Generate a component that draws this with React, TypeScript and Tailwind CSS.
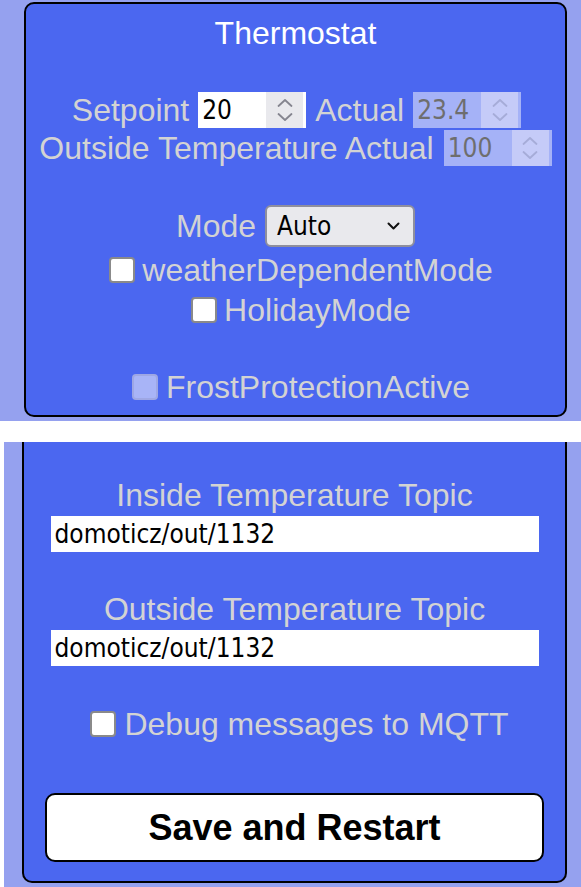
import React from "react";

function Spinner({ disabled }: { disabled?: boolean }) {
  const c = disabled ? "#a6acd8" : "#85858f";
  return (
    <div
      className={`h-full w-[37px] flex items-center justify-center ${
        disabled ? "bg-[#c5cbf8]" : "bg-[#e9e9ed]"
      }`}
    >
      <svg width="16" height="28" viewBox="0 0 16 28" fill="none" stroke={c} strokeWidth="1.8" strokeLinecap="round" strokeLinejoin="round">
        <path d="M1.5 10 L8 4 L14.5 10" />
        <path d="M1.5 18 L8 24 L14.5 18" />
      </svg>
    </div>
  );
}

function NumberBox({ value, disabled }: { value: string; disabled?: boolean }) {
  return (
    <div
      className={`flex h-[36px] w-[108px] items-stretch pr-[3px] ${
        disabled ? "bg-[#a5b2f7] text-[#6e6e6e]" : "bg-white text-black"
      }`}
    >
      <div className="flex flex-1 items-center pl-[4px] text-[26px] [font-family:'DejaVu_Sans_Condensed','DejaVu_Sans',sans-serif] [font-stretch:condensed]">
        {value}
      </div>
      <Spinner disabled={disabled} />
    </div>
  );
}

function Check({ disabled }: { disabled?: boolean }) {
  return (
    <div
      className={`h-[26px] w-[26px] rounded-[4px] border-2 ${
        disabled ? "border-[#9ea7e4] bg-[#a8b4f7]" : "border-[#8a8a8a] bg-white"
      }`}
    />
  );
}

export default function App() {
  return (
    <div className="flex h-[887px] w-[581px] flex-col overflow-hidden bg-white [font-family:'Liberation_Sans',Arial,sans-serif] text-[32px] leading-none text-[#d3d3d3]">
      {/* Section 1 */}
      <div className="h-[421px] bg-[#95a1ef] pl-[24px] pr-[14px] pt-[2px]">
        <div className="flex h-[415px] w-[543px] flex-col items-center rounded-[10px] border-2 border-black bg-[#4b67f0] pt-[10px]">
          <div className="flex h-[38px] items-center text-white">Thermostat</div>
          <div className="h-[39px]" />
          <div className="flex h-[38px] items-center gap-[9px] pl-[2px]">
            <span>Setpoint</span>
            <NumberBox value="20" />
            <span>Actual</span>
            <NumberBox value="23.4" disabled />
          </div>
          <div className="flex h-[37px] items-center gap-[10px]">
            <span>Outside Temperature Actual</span>
            <NumberBox value="100" disabled />
          </div>
          <div className="h-[39px]" />
          <div className="flex h-[43px] items-start gap-[9px]">
            <span className="mt-[5px]">Mode</span>
            <div className="flex h-[42px] w-[150px] items-center justify-between rounded-[6px] border-2 border-[#8f8f9d] bg-[#e9e9ed] pl-[10px] pr-[13px] text-[26px] text-black [font-family:'DejaVu_Sans_Condensed','DejaVu_Sans',sans-serif] [font-stretch:condensed]">
              <span>Auto</span>
              <svg width="13" height="9" viewBox="0 0 13 9" fill="none" stroke="#111" strokeWidth="2" strokeLinecap="round" strokeLinejoin="round">
                <path d="M1.5 1.5 L6.5 6.5 L11.5 1.5" />
              </svg>
            </div>
          </div>
          <div className="h-[2px]" />
          <div className="flex h-[40px] items-center gap-[7px] pl-[11px]">
            <Check />
            <span>weatherDependentMode</span>
          </div>
          <div className="flex h-[40px] items-center gap-[7px] pl-[11px]">
            <Check />
            <span>HolidayMode</span>
          </div>
          <div className="h-[38px]" />
          <div className="flex h-[38px] items-center gap-[8px] pl-[11px]">
            <Check disabled />
            <span>FrostProtectionActive</span>
          </div>
        </div>
      </div>

      {/* white gap */}
      <div className="h-[21px] bg-white" />

      {/* Section 2 */}
      <div className="flex h-[445px]">
        <div className="w-[4px] bg-white" />
        <div className="flex-1 bg-[#95a1ef] pl-[18px]">
          <div className="flex h-[441px] w-[545px] flex-col items-center rounded-b-[10px] border-2 border-t-0 border-black bg-[#4b67f0] pt-[34px]">
            <div className="flex h-[38px] items-center">Inside Temperature Topic</div>
            <div className="h-[2px]" />
            <div className="flex h-[36px] w-[488px] items-center bg-white pl-[4px] text-[26px] text-black [font-family:'DejaVu_Sans_Condensed','DejaVu_Sans',sans-serif] [font-stretch:condensed]">
              domoticz/out/1132
            </div>
            <div className="h-[38px]" />
            <div className="flex h-[38px] items-center">Outside Temperature Topic</div>
            <div className="h-[2px]" />
            <div className="flex h-[36px] w-[488px] items-center bg-white pl-[4px] text-[26px] text-black [font-family:'DejaVu_Sans_Condensed','DejaVu_Sans',sans-serif] [font-stretch:condensed]">
              domoticz/out/1132
            </div>
            <div className="h-[39px]" />
            <div className="flex h-[38px] items-center gap-[8px] pl-[10px]">
              <Check />
              <span>Debug messages to MQTT</span>
            </div>
            <div className="h-[50px]" />
            <button className="flex h-[69px] w-[499px] items-center justify-center rounded-[10px] border-2 border-black bg-white text-[36px] font-bold text-black [font-family:'Liberation_Sans',Arial,sans-serif]">
              Save and Restart
            </button>
          </div>
        </div>
      </div>
    </div>
  );
}
